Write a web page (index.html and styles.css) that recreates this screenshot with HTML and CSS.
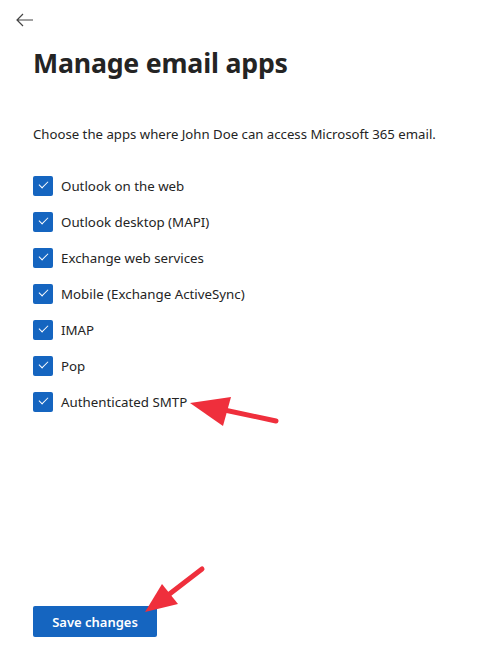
FILE: index.html
```html
<!DOCTYPE html>
<html lang="en">
<head>
    <meta charset="UTF-8">
    <meta name="viewport" content="width=device-width, initial-scale=1.0">
    <title>Manage email apps</title>
    <link rel="stylesheet" href="styles.css">
</head>
<body>
    <div class="panel">
        <button class="back" aria-label="Back">
            <svg width="18" height="14" viewBox="0 0 18 14">
                <path d="M7 1 L1 7 L7 13 M1 7 H17" fill="none" stroke="#444" stroke-width="1.2"/>
            </svg>
        </button>

        <h1 class="title">Manage email apps</h1>

        <p class="intro">Choose the apps where John Doe can access Microsoft 365 email.</p>

        <ul class="apps">
            <li class="app"><span class="check"></span>Outlook on the web</li>
            <li class="app"><span class="check"></span>Outlook desktop (MAPI)</li>
            <li class="app"><span class="check"></span>Exchange web services</li>
            <li class="app"><span class="check"></span>Mobile (Exchange ActiveSync)</li>
            <li class="app"><span class="check"></span>IMAP</li>
            <li class="app"><span class="check"></span>Pop</li>
            <li class="app"><span class="check"></span>Authenticated SMTP</li>
        </ul>

        <div class="footer">
            <button class="save">Save changes</button>
        </div>

        <!-- callout arrows -->
        <svg class="callouts" width="491" height="652" viewBox="0 0 491 652">
            <line x1="276" y1="421" x2="215" y2="408" stroke="#ef2f3c" stroke-width="5" stroke-linecap="round"/>
            <polygon points="190,403 231,397 223,426" fill="#ef2f3c"/>
            <line x1="202" y1="569" x2="163" y2="599" stroke="#ef2f3c" stroke-width="5" stroke-linecap="round"/>
            <polygon points="145,612 162,584 178,604" fill="#ef2f3c"/>
        </svg>
    </div>
</body>
</html>
```

FILE: styles.css
```css
body {
    margin: 0;
    background: #fff;
    font-family: "Noto Sans", "Open Sans", sans-serif;
    color: #242424;
}

.panel {
    position: relative;
    width: 491px;
    height: 652px;
    padding: 0 0 0 33px;
    box-sizing: border-box;
    display: flex;
    flex-direction: column;
}

.back {
    margin: 13px 0 0 -17px;
    width: 18px;
    height: 14px;
    padding: 0;
    border: 0;
    background: none;
    display: flex;
}

.title {
    margin: 17px 0 0;
    font-size: 26.7px;
    font-weight: 700;
    line-height: 38px;
    letter-spacing: -0.2px;
}

.intro {
    margin: 42px 0 0;
    font-size: 13.2px;
    line-height: 20px;
}

.apps {
    list-style: none;
    margin: 32px 0 0;
    padding: 0;
    display: flex;
    flex-direction: column;
    gap: 16px;
}

.app {
    display: flex;
    align-items: center;
    gap: 8px;
    font-size: 13.3px;
    line-height: 20px;
}

.check {
    width: 20px;
    height: 20px;
    border-radius: 2px;
    background: #1565c0;
    position: relative;
    flex: none;
}

.check::after {
    content: '';
    position: absolute;
    left: 6px;
    top: 5px;
    width: 8px;
    height: 4px;
    border-left: 1px solid #fff;
    border-bottom: 1px solid #fff;
    transform: rotate(-45deg);
}

.footer {
    margin-top: auto;
    padding-bottom: 15px;
}

.save {
    width: 124px;
    height: 31px;
    border: 0;
    border-radius: 2px;
    background: #1565c0;
    color: #fff;
    font-family: inherit;
    font-size: 13px;
    font-weight: 600;
    padding: 0;
}

.callouts {
    position: absolute;
    left: 0;
    top: 0;
    pointer-events: none;
}
```
